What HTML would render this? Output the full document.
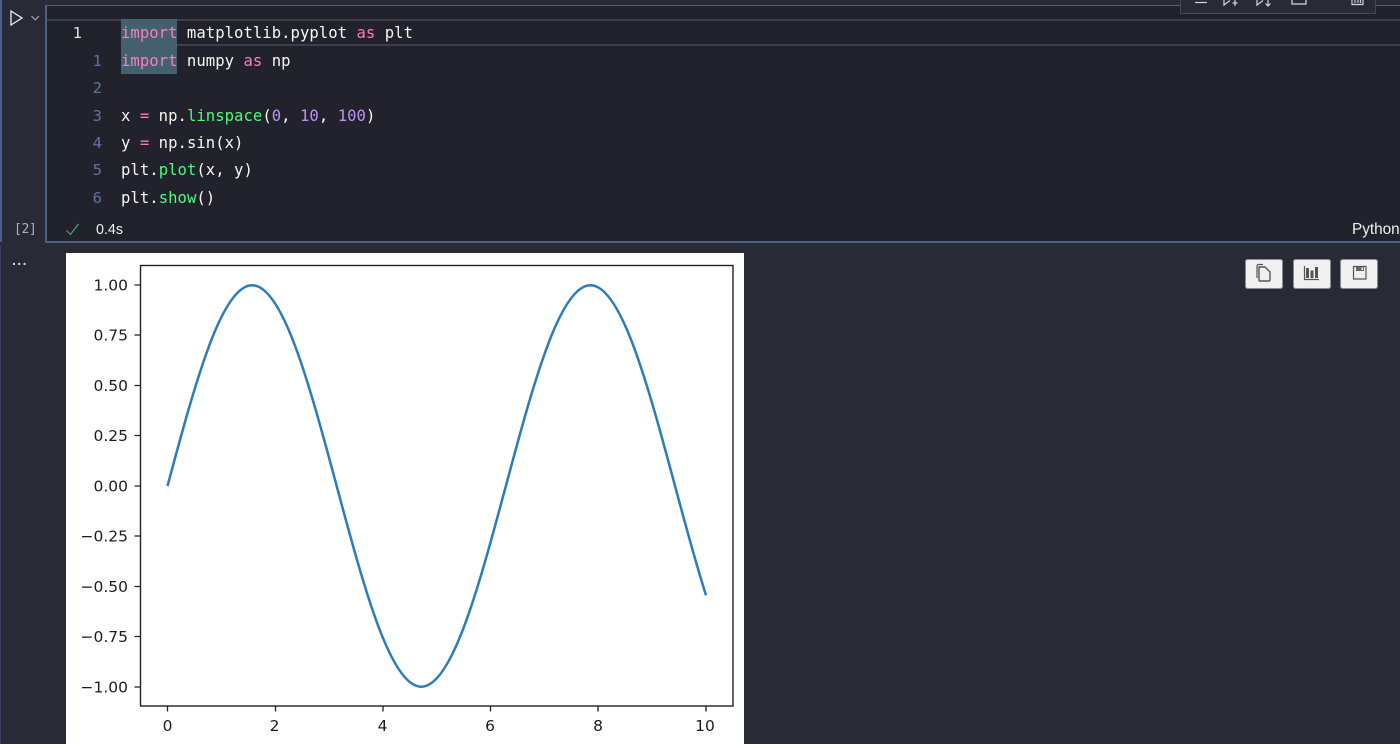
<!DOCTYPE html>
<html><head><meta charset="utf-8">
<style>
html,body{margin:0;padding:0;width:1400px;height:744px;overflow:hidden;background:#282a36}
.a{position:absolute}
#ed{left:45px;top:5px;width:1360px;height:237.500px;background:#21222c;border-top:1px solid #4f5d8c;border-left:2px solid #4f5d8c;border-bottom:2px solid #4f5d8c;box-sizing:border-box}
.l{position:absolute;left:121px;font:15.600px/20px "DejaVu Sans Mono","Liberation Mono",monospace;color:#f8f8f2;white-space:pre;letter-spacing:.03px;filter:blur(.3px)}
.n{position:absolute;font:15.500px/20px "DejaVu Sans Mono","Liberation Mono",monospace;color:#6272a4;width:20px;text-align:right;left:82px;filter:blur(.3px)}
.p{color:#ff79c6}.g{color:#50fa7b}.v{color:#bd93f9}
.btn{position:absolute;top:259px;width:38px;height:30px;background:#f0f0f0;border-radius:3px;box-shadow:inset 0 0 0 1px #8a8b90;box-sizing:border-box}
.btn svg{filter:blur(.3px)}
svg{display:block}
</style></head><body>
<div class="a" style="left:0;top:0;width:1.500px;height:242px;background:#4f5d8c"></div>
<div class="a" style="left:0;top:245px;width:1px;height:499px;background:#3b4260"></div>
<div class="a" id="ed"></div>
<div class="a" style="left:47px;top:19px;width:1353px;height:2px;background:#3d3f4e"></div>
<div class="a" style="left:177px;top:44px;width:1223px;height:2px;background:#3d3f4e"></div>
<div class="a" style="left:121px;top:19px;width:56px;height:55px;background:#44606f"></div>
<div class="n" style="left:62px;top:23px;color:#e0e0e0">1</div>
<div class="l" style="top:23px"><span class="p">import</span> matplotlib.pyplot <span class="p">as</span> plt</div>
<div class="n" style="top:50.500px">1</div>
<div class="l" style="top:50.500px"><span class="p">import</span> numpy <span class="p">as</span> np</div>
<div class="n" style="top:78px">2</div>
<div class="n" style="top:106px">3</div>
<div class="l" style="top:106px">x <span class="p">=</span> np.<span class="g">linspace</span>(<span class="v">0</span>, <span class="v">10</span>, <span class="v">100</span>)</div>
<div class="n" style="top:132.500px">4</div>
<div class="l" style="top:132.500px">y <span class="p">=</span> np.sin(x)</div>
<div class="n" style="top:160px">5</div>
<div class="l" style="top:160px">plt.<span class="g">plot</span>(x, y)</div>
<div class="n" style="top:187.500px">6</div>
<div class="l" style="top:187.500px">plt.<span class="g">show</span>()</div>

<svg class="a" style="left:0;top:0" width="50" height="30"><path d="M11 11V25L22 18Z" fill="none" stroke="#f0f0f0" stroke-width="1.300"/><path d="M31.500 16l3.800 3.800L39 16" fill="none" stroke="#a8a8ad" stroke-width="1.200"/></svg>
<div class="a" style="left:14px;top:222px;font:13px/16px 'DejaVu Sans Mono',monospace;color:#b0b0b5;letter-spacing:-.3px">[2]</div>
<svg class="a" style="left:64px;top:221px" width="18" height="16"><path d="M2.500 9.500L6.500 13.500L14.500 3" fill="none" stroke="#50a060" stroke-width="1.200"/></svg>
<div class="a" style="left:96px;top:222px;font:14.300px/16px 'Liberation Sans',sans-serif;color:#f0f0f0">0.4s</div>
<div class="a" style="left:1352px;top:222px;font:15.300px/16px 'Liberation Sans',sans-serif;color:#f0f0f0;white-space:nowrap">Python</div>
<div class="a" style="left:12px;top:253px;font:bold 14px/14px 'Liberation Sans',sans-serif;color:#d8d8d8;letter-spacing:1.400px">...</div>

<div class="a" style="left:1180px;top:-1px;width:196px;height:15px;background:#282a36;border:1px solid #44475a;box-sizing:border-box"></div>
<svg class="a" style="left:1180px;top:0" width="196" height="14" fill="none" stroke="#d6d6d8" stroke-width="1.200">
<path d="M15 2.500H27"/>
<path d="M44 0V5L50 0.500M55 0V6M52.500 3H57.500" />
<path d="M77 0V5L83 0.500M88 0V6M85.500 3.500L88 6L90.500 3.500"/>
<path d="M112 0V4H126V0"/>
<path d="M172 0V4.500H183V0M175 0V3M178 0V3M180.500 0V3"/>
</svg>

<div class="btn" style="left:1245px"><svg width="38" height="30" fill="none" stroke="#555" stroke-width="1.200"><path d="M18 5.500h-4.500a1.500 1.500 0 0 0-1.500 1.500v12"/><path d="M14 8h6l5 5v8a1 1 0 0 1-1 1h-9a1 1 0 0 1-1-1z" stroke-width="1.400"/></svg></div>
<div class="btn" style="left:1293px"><svg width="38" height="30"><path d="M11.500 7V20.500H26" fill="none" stroke="#555" stroke-width="1.200"/><rect x="13" y="9" width="3" height="10" fill="#555"/><rect x="17.500" y="11.500" width="3" height="7.500" fill="#555"/><rect x="22" y="8" width="3" height="11" fill="#555"/></svg></div>
<div class="btn" style="left:1340px"><svg width="38" height="30"><path d="M13.500 7.500H26V20H13.500Z" fill="none" stroke="#555" stroke-width="1.200"/><rect x="16" y="8" width="8" height="4" fill="#666"/><rect x="21.500" y="8.500" width="1.500" height="2.500" fill="#f0f0f0"/></svg></div>

<div class="a" style="left:66px;top:253px;width:678px;height:491px;background:#fff"></div>
<svg class="a" style="left:66px;top:253px;filter:blur(.35px)" width="678" height="491" viewBox="66 253 678 491">
<path d="M167.500 486C181.600 433.460 195.690 381.230 209.790 344.080C223.890 306.930 237.990 285.300 252.090 285.300C266.190 285.300 280.280 306.930 294.380 344.080C308.480 381.230 322.580 433.460 336.680 486C350.780 538.540 364.870 590.770 378.970 627.920C393.070 665.070 407.170 686.700 421.270 686.700C435.370 686.700 449.460 665.070 463.560 627.920C477.660 590.770 491.760 538.540 505.860 486C519.960 433.460 534.050 381.230 548.150 344.080C562.250 306.930 576.350 285.300 590.450 285.300C604.550 285.300 618.640 306.930 632.740 344.080C646.840 381.230 660.940 433.460 675.040 486C685.360 524.480 695.680 562.900 706 595.200" fill="none" stroke="#2b7cb8" stroke-width="2.500"/>
<rect x="140.500" y="265.500" width="592.500" height="440.500" fill="none" stroke="#222" stroke-width="1.400"/>
<g stroke="#222" stroke-width="1.300">
<path d="M134.500 285H140M134.500 335H140M134.500 385.500H140M134.500 435.500H140M134.500 486H140M134.500 536H140M134.500 586.500H140M134.500 636.500H140M134.500 687H140"/>
<path d="M167.500 706V711.500M275.500 706V711.500M383 706V711.500M490.500 706V711.500M598 706V711.500M706 706V711.500"/>
</g>
<g font-family="'DejaVu Sans',sans-serif" font-size="15.500" fill="#1c1c1c" text-anchor="end">
<text x="128" y="290.500">1.00</text>
<text x="128" y="340.500">0.75</text>
<text x="128" y="391">0.50</text>
<text x="128" y="441">0.25</text>
<text x="128" y="491.500">0.00</text>
<text x="128" y="541.500">−0.25</text>
<text x="128" y="592">−0.50</text>
<text x="128" y="642">−0.75</text>
<text x="128" y="692.500">−1.00</text>
</g>
<g font-family="'DejaVu Sans',sans-serif" font-size="15.500" fill="#1c1c1c" text-anchor="middle">
<text x="167.500" y="731">0</text>
<text x="274.500" y="731">2</text>
<text x="382.500" y="731">4</text>
<text x="490" y="731">6</text>
<text x="598" y="731">8</text>
<text x="705" y="731">10</text>
</g>
</svg>
</body></html>
